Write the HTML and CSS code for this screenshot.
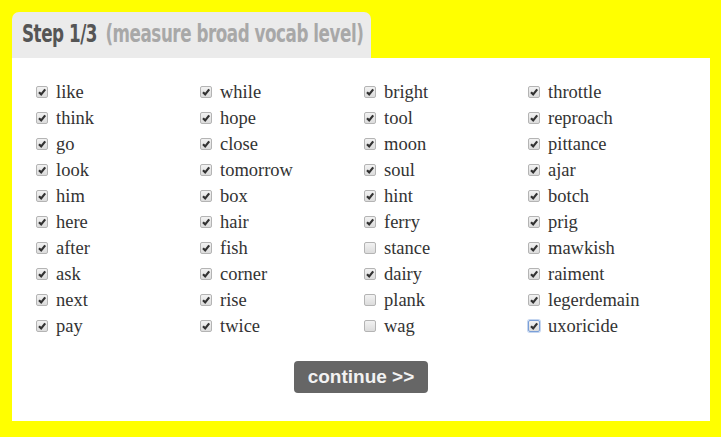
FILE: index.html
```html
<!DOCTYPE html>
<html>
<head>
<meta charset="utf-8">
<link rel="stylesheet" href="styles.css">
</head>
<body>
<div class="wrap">
  <div class="tab"><div class="title"><span class="step">Step 1/3</span><span class="sub">(measure broad vocab level)</span></div></div>
  <div class="panel">
    <div class="grid">
      <label class="item"><input type="checkbox" checked><span>like</span></label>
      <label class="item"><input type="checkbox" checked><span>while</span></label>
      <label class="item"><input type="checkbox" checked><span>bright</span></label>
      <label class="item"><input type="checkbox" checked><span>throttle</span></label>
      <label class="item"><input type="checkbox" checked><span>think</span></label>
      <label class="item"><input type="checkbox" checked><span>hope</span></label>
      <label class="item"><input type="checkbox" checked><span>tool</span></label>
      <label class="item"><input type="checkbox" checked><span>reproach</span></label>
      <label class="item"><input type="checkbox" checked><span>go</span></label>
      <label class="item"><input type="checkbox" checked><span>close</span></label>
      <label class="item"><input type="checkbox" checked><span>moon</span></label>
      <label class="item"><input type="checkbox" checked><span>pittance</span></label>
      <label class="item"><input type="checkbox" checked><span>look</span></label>
      <label class="item"><input type="checkbox" checked><span>tomorrow</span></label>
      <label class="item"><input type="checkbox" checked><span>soul</span></label>
      <label class="item"><input type="checkbox" checked><span>ajar</span></label>
      <label class="item"><input type="checkbox" checked><span>him</span></label>
      <label class="item"><input type="checkbox" checked><span>box</span></label>
      <label class="item"><input type="checkbox" checked><span>hint</span></label>
      <label class="item"><input type="checkbox" checked><span>botch</span></label>
      <label class="item"><input type="checkbox" checked><span>here</span></label>
      <label class="item"><input type="checkbox" checked><span>hair</span></label>
      <label class="item"><input type="checkbox" checked><span>ferry</span></label>
      <label class="item"><input type="checkbox" checked><span>prig</span></label>
      <label class="item"><input type="checkbox" checked><span>after</span></label>
      <label class="item"><input type="checkbox" checked><span>fish</span></label>
      <label class="item"><input type="checkbox"><span>stance</span></label>
      <label class="item"><input type="checkbox" checked><span>mawkish</span></label>
      <label class="item"><input type="checkbox" checked><span>ask</span></label>
      <label class="item"><input type="checkbox" checked><span>corner</span></label>
      <label class="item"><input type="checkbox" checked><span>dairy</span></label>
      <label class="item"><input type="checkbox" checked><span>raiment</span></label>
      <label class="item"><input type="checkbox" checked><span>next</span></label>
      <label class="item"><input type="checkbox" checked><span>rise</span></label>
      <label class="item"><input type="checkbox"><span>plank</span></label>
      <label class="item"><input type="checkbox" checked><span>legerdemain</span></label>
      <label class="item"><input type="checkbox" checked><span>pay</span></label>
      <label class="item"><input type="checkbox" checked><span>twice</span></label>
      <label class="item"><input type="checkbox"><span>wag</span></label>
      <label class="item"><input type="checkbox" class="focus" checked><span>uxoricide</span></label>
    </div>
    <div class="actions"><button class="btn">continue &gt;&gt;</button></div>
  </div>
</div>
</body>
</html>
```

FILE: styles.css
```css
html, body {
  margin: 0;
  padding: 0;
  background: #ffff00;
}
.wrap {
  padding: 12px 11px 16px 12px;
}
.tab {
  width: 359px;
  height: 46px;
  box-sizing: border-box;
  background: #ebebeb;
  border-radius: 7px 7px 0 0;
  padding: 7px 0 0 10px;
  overflow: hidden;
}
.title {
  display: inline-block;
  font-family: "DejaVu Sans Condensed", "DejaVu Sans", sans-serif;
  font-stretch: condensed;
  font-weight: bold;
  font-size: 24.5px;
  line-height: 30px;
  letter-spacing: -0.6px;
  white-space: nowrap;
  transform: scaleX(0.76);
  transform-origin: 0 0;
}
.step {
  color: #555555;
  margin-right: 11px;
}
.sub {
  color: #a8a8a8;
}
.panel {
  background: #ffffff;
  height: 363px;
  box-sizing: border-box;
  padding: 21px 0 0 24px;
}
.grid {
  display: grid;
  grid-template-columns: repeat(4, 164px);
  grid-auto-rows: 26px;
}
.item {
  display: flex;
  align-items: center;
  font-family: "Liberation Serif", "DejaVu Serif", serif;
  font-size: 18.5px;
  color: #333333;
}
.item input {
  appearance: none;
  -webkit-appearance: none;
  width: 12px;
  height: 12px;
  margin: 0 8px 0 0;
  border: 1px solid #b4b4b4;
  border-radius: 2px;
  background: linear-gradient(#f2f2f2, #dcdcdc);
  box-sizing: border-box;
}
.item input:checked {
  background-image: url("data:image/svg+xml;utf8,<svg xmlns='http://www.w3.org/2000/svg' viewBox='0 0 10 10'><path d='M2 5.2 L4.2 7.4 L8.2 2.4' fill='none' stroke='%23333' stroke-width='2.2'/></svg>"), linear-gradient(#f2f2f2, #dcdcdc);
  background-size: 10px 10px, 100% 100%;
  background-repeat: no-repeat;
}
.item input.focus {
  border-color: #7a9fd8;
  box-shadow: 0 0 0 1px #c5d6f0;
}
.actions {
  display: flex;
  justify-content: center;
  padding: 22px 0 0 0;
  margin-left: -24px;
}
.btn {
  background: #666666;
  color: #f2f2f2;
  border: none;
  border-radius: 4px;
  font-family: "Liberation Sans", Arial, sans-serif;
  font-weight: bold;
  font-size: 19px;
  width: 134px;
  height: 32px;
  padding: 0;
}
```
